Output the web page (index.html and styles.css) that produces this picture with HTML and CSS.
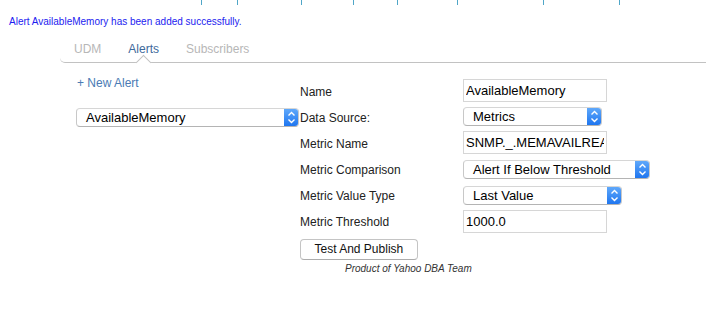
FILE: index.html
```html
<!doctype html>
<html>
  <head>
    <meta charset="utf-8" />
    <title>Alerts</title>
    <link rel="stylesheet" href="styles.css">
  </head>
  <body>
    <div class="ticks">
      <span class="tick" style="width:202px"></span>
      <span class="tick" style="width:36px"></span>
      <span class="tick" style="width:64px"></span>
      <span class="tick" style="width:52px"></span>
      <span class="tick" style="width:44px"></span>
      <span class="tick" style="width:60px"></span>
      <span class="tick" style="width:86px"></span>
      <span class="tick" style="width:76px"></span>
      <span class="tick last"></span>
    </div>
    <p class="flash">Alert AvailableMemory has been added successfully.</p>
    <div class="tabs">
      <a class="tab">UDM</a>
      <a class="tab active">Alerts<span class="caret"></span></a>
      <a class="tab">Subscribers</a>
    </div>
    <div class="main">
      <div class="sidebar">
        <a class="new-alert">+ New Alert</a>
        <div class="select wide"><span class="select-text">AvailableMemory</span><span class="stepper"><svg width="15" height="19" viewBox="0 0 15 19"><path d="M4.5 7.5 L7.5 4.5 L10.5 7.5 M4.5 11.5 L7.5 14.5 L10.5 11.5" fill="none" stroke="#fff" stroke-width="1.4"/></svg></span></div>
      </div>
      <div class="editor">
        <div class="form">
          <label>Name</label>
          <input class="field" type="text" value="AvailableMemory">
          <label>Data Source:</label>
          <div class="select source"><span class="select-text">Metrics</span><span class="stepper"><svg width="15" height="19" viewBox="0 0 15 19"><path d="M4.5 7.5 L7.5 4.5 L10.5 7.5 M4.5 11.5 L7.5 14.5 L10.5 11.5" fill="none" stroke="#fff" stroke-width="1.4"/></svg></span></div>
          <label>Metric Name</label>
          <input class="field" type="text" value="SNMP._.MEMAVAILREAL">
          <label>Metric Comparison</label>
          <div class="select comparison"><span class="select-text">Alert If Below Threshold</span><span class="stepper"><svg width="15" height="19" viewBox="0 0 15 19"><path d="M4.5 7.5 L7.5 4.5 L10.5 7.5 M4.5 11.5 L7.5 14.5 L10.5 11.5" fill="none" stroke="#fff" stroke-width="1.4"/></svg></span></div>
          <label>Metric Value Type</label>
          <div class="select value-type"><span class="select-text">Last Value</span><span class="stepper"><svg width="15" height="19" viewBox="0 0 15 19"><path d="M4.5 7.5 L7.5 4.5 L10.5 7.5 M4.5 11.5 L7.5 14.5 L10.5 11.5" fill="none" stroke="#fff" stroke-width="1.4"/></svg></span></div>
          <label>Metric Threshold</label>
          <input class="field" type="text" value="1000.0">
        </div>
        <button class="publish">Test And Publish</button>
        <p class="credit">Product of Yahoo DBA Team</p>
      </div>
    </div>
  </body>
</html>
```

FILE: styles.css
```css
* { margin: 0; padding: 0; box-sizing: border-box; }
body { margin: 0; background: #fff; color: #222; font-family: "Liberation Sans", Arial, sans-serif; width: 706px; }

.ticks { display: flex; height: 5px; }
.tick { display: block; height: 5px; border-right: 1px solid #4fa6c8; }
.tick.last { border-right: none; }

.flash { font-size: 10px; line-height: 12px; color: #1c1cf0; margin: 11px 0 0 9px; }

.tabs {
  display: flex;
  margin: 14px 0 0 60px;
  border-bottom: 1px solid #c2c2c2;
  border-bottom-left-radius: 5px;
}
.tab {
  position: relative;
  font-size: 12px;
  line-height: 14px;
  padding: 0 13.5px 6px 13.5px;
  color: #b7b7b7;
}
.tab:first-child { padding-left: 14px; }
.tab.active { color: #3e6a9b; }
.caret {
  position: absolute;
  left: 50%;
  bottom: -6px;
  width: 11px;
  height: 11px;
  margin-left: -5.5px;
  background: #fff;
  border-top: 1px solid #c2c2c2;
  border-left: 1px solid #c2c2c2;
  transform: rotate(45deg);
}

.main { display: flex; margin-left: 60px; padding-left: 16px; }
.sidebar { width: 224px; padding-top: 13px; display: flex; flex-direction: column; align-items: flex-start; }
.new-alert { font-size: 12px; line-height: 14px; color: #4a7bb4; margin-left: 1px; }

.select {
  display: flex;
  align-items: center;
  height: 19px;
  border: 1px solid #c8c8c8;
  border-top-color: #d6d6d6;
  border-bottom-color: #b4b4b4;
  border-radius: 4px;
  background: #fff;
  font-size: 13px;
  color: #000;
  overflow: hidden;
}
.select-text { flex: 1; padding-left: 9px; white-space: nowrap; line-height: 17px; }
.stepper {
  width: 15px;
  height: 19px;
  margin: -1px -1px -1px 0;
  border-radius: 0 4px 4px 0;
  background: linear-gradient(#63abfb, #1b73ef);
  display: flex;
}
.select.wide { width: 223px; margin-top: 18px; }
.select.source { width: 139px; }
.select.comparison { width: 187px; }
.select.value-type { width: 159px; }

.editor { padding-top: 16px; }
.form {
  display: grid;
  grid-template-columns: 163px auto;
  grid-auto-rows: 23px;
  row-gap: 3.2px;
  align-items: center;
}
.form label { font-size: 12px; color: #222; padding-top: 2px; }
.field {
  width: 144px;
  height: 23px;
  border: 1px solid #d6d6d6;
  padding: 0 2px;
  font-family: "Liberation Sans", Arial, sans-serif;
  font-size: 13px;
  color: #000;
  outline: none;
}

.publish {
  display: block;
  margin-top: 6px;
  height: 21px;
  padding: 0 13.5px;
  border: 1px solid #c4c4c4;
  border-bottom-color: #adadad;
  border-radius: 4px;
  background: #fff;
  font-family: "Liberation Sans", Arial, sans-serif;
  font-size: 12px;
  color: #111;
}
.credit { font-size: 10px; line-height: 12px; font-style: italic; color: #333; margin: 3px 0 0 45px; }
```
